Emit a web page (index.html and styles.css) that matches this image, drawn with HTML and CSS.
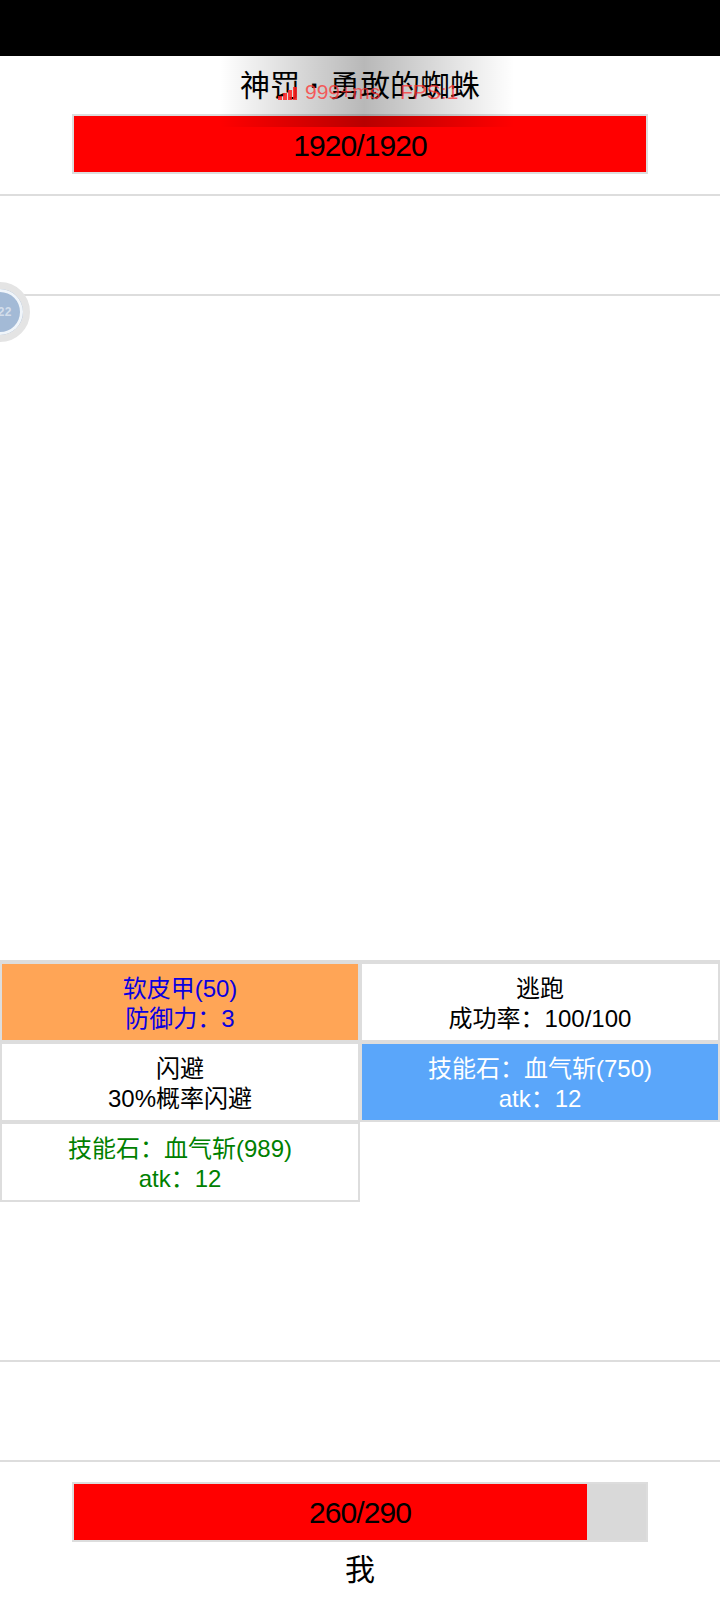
FILE: index.html
```html
<!DOCTYPE html>
<html lang="zh-CN">
<head>
    <meta charset="UTF-8">
    <meta name="viewport" content="width=device-width, initial-scale=1.0">
    <title>战斗</title>
    <link rel="stylesheet" href="styles.css">
</head>
<body>
    <div class="status-bar"></div>

    <div class="enemy">
        <div class="name">神罚<span class="name-dot">·</span>勇敢的蜘蛛</div>
        <div class="hp-bar">
            <div class="hp-fill" style="width: 100%"></div>
            <div class="hp-text">1920/1920</div>
        </div>
    </div>

    <div class="buffs buffs-enemy"></div>

    <div class="battle-log"></div>

    <div class="skills">
        <div class="skill skill-orange">
            <div>软皮甲(50)</div>
            <div>防御力<span class="colon">：</span>3</div>
        </div>
        <div class="skill">
            <div>逃跑</div>
            <div>成功率<span class="colon">：</span>100/100</div>
        </div>
        <div class="skill">
            <div>闪避</div>
            <div>30%概率闪避</div>
        </div>
        <div class="skill skill-blue">
            <div>技能石<span class="colon">：</span>血气斩(750)</div>
            <div>atk<span class="colon">：</span>12</div>
        </div>
        <div class="skill skill-green">
            <div>技能石<span class="colon">：</span>血气斩(989)</div>
            <div>atk<span class="colon">：</span>12</div>
        </div>
    </div>

    <div class="buffs buffs-player"></div>

    <div class="player">
        <div class="hp-bar">
            <div class="hp-fill" style="width: 89.66%"></div>
            <div class="hp-text hp-text-player">260/290</div>
        </div>
        <div class="name name-player">我</div>
    </div>

    <!-- floating level ball -->
    <div class="ball"><span class="ball-level">22</span></div>

    <!-- debug overlay -->
    <div class="perf">
        <svg class="perf-icon" width="19" height="13" viewBox="0 0 19 13">
            <rect x="0" y="9" width="4" height="4"></rect>
            <rect x="5" y="6" width="4" height="7"></rect>
            <rect x="10" y="3" width="4" height="10"></rect>
            <rect x="15" y="0" width="4" height="13"></rect>
        </svg>
        <span class="perf-ms">999+ms</span>
        <span class="perf-fps">FPS:1</span>
    </div>
</body>
</html>
```

FILE: styles.css
```css
html, body {
    margin: 0;
    padding: 0;
}

body {
    width: 720px;
    height: 1600px;
    position: relative;
    overflow: hidden;
    display: flex;
    flex-direction: column;
    background: #fff;
    color: #000;
    font-family: "Liberation Sans", "Noto Sans CJK SC", sans-serif;
}

.status-bar {
    height: 56px;
    background: #000;
}

.enemy {
    padding-bottom: 20px;
    border-bottom: 2px solid #ddd;
}

.name {
    height: 58px;
    line-height: 60px;
    font-size: 30px;
    text-align: center;
}

.name-dot {
    display: inline-block;
    width: 30px;
    font-weight: bold;
    line-height: 0;
}

.hp-bar {
    position: relative;
    box-sizing: border-box;
    width: 576px;
    height: 60px;
    margin: 0 auto;
    border: 2px solid #ddd;
    background: #d9d9d9;
}

.hp-fill {
    height: 100%;
    background: #f00;
}

.hp-text {
    position: absolute;
    top: 2px;
    left: 0;
    right: 0;
    line-height: 56px;
    font-size: 30px;
    letter-spacing: -0.9px;
    text-align: center;
}

.hp-text-player {
    top: 1px;
}

.buffs-enemy {
    height: 98px;
    border-bottom: 2px solid #ddd;
}

.battle-log {
    height: 664px;
}

.skills {
    box-sizing: border-box;
    height: 400px;
    display: grid;
    grid-template-columns: 1fr 1fr;
    grid-auto-rows: 80px;
    border-top: 2px solid #ddd;
    font-size: 24px;
    line-height: 30px;
    text-align: center;
}

.skill {
    box-sizing: border-box;
    border: 2px solid #ddd;
    padding-top: 10px;
}

.colon {
    font-family: "Noto Sans CJK TC", sans-serif;
    line-height: 0;
}

.skill-orange {
    background: #ffa556;
    color: #0a00e0;
}

.skill-blue {
    background: #5aa6fa;
    color: #fff;
}

.skill-green {
    color: #008000;
}

.buffs-player {
    height: 98px;
    border-top: 2px solid #ddd;
    border-bottom: 2px solid #ddd;
}

.player {
    padding-top: 20px;
}

.name-player {
    height: 58px;
    line-height: 56px;
}

.ball {
    position: absolute;
    left: -30px;
    top: 282px;
    box-sizing: border-box;
    width: 60px;
    height: 60px;
    display: flex;
    align-items: center;
    justify-content: flex-end;
    padding-right: 11px;
    border: 7px solid #e4e4e4;
    border-radius: 50%;
    background: #a3bad6;
    box-shadow: inset 0 0 0 3px #f0f5fa;
}

.ball-level {
    font-size: 12px;
    font-weight: bold;
    letter-spacing: 0.5px;
    color: #d3deeb;
}

.perf {
    position: absolute;
    left: 220px;
    top: 56px;
    width: 294px;
    height: 71px;
    background: linear-gradient(to right, rgba(0, 0, 0, 0), rgba(0, 0, 0, 0.28) 49%, rgba(0, 0, 0, 0));
    color: rgba(255, 50, 50, 0.75);
    font-size: 21px;
    line-height: 24px;
}

.perf-icon {
    position: absolute;
    left: 58px;
    top: 31px;
    fill: rgba(255, 30, 30, 0.85);
}

.perf-ms {
    position: absolute;
    left: 85px;
    top: 24px;
}

.perf-fps {
    position: absolute;
    left: 180px;
    top: 24px;
}
```
